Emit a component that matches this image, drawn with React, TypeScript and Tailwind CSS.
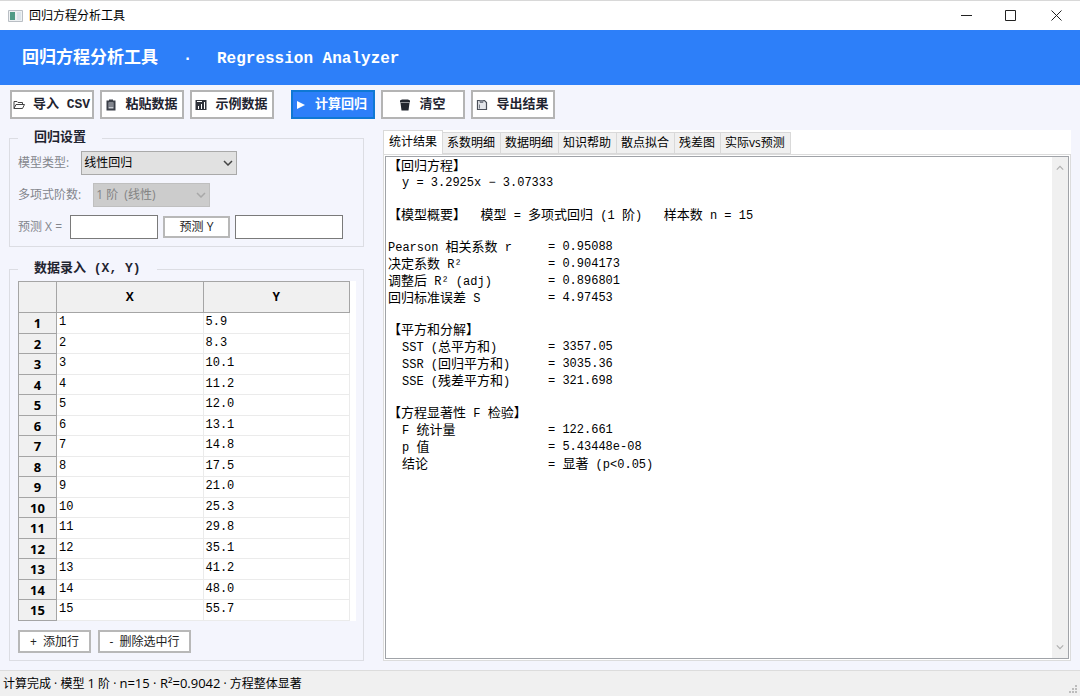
import { useState } from 'react';
import type { ReactNode } from 'react';

const points = [
  ['1', '5.9'], ['2', '8.3'], ['3', '10.1'], ['4', '11.2'], ['5', '12.0'],
  ['6', '13.1'], ['7', '14.8'], ['8', '17.5'], ['9', '21.0'], ['10', '25.3'],
  ['11', '29.8'], ['12', '35.1'], ['13', '41.2'], ['14', '48.0'], ['15', '55.7'],
];

const tabs = ['统计结果', '系数明细', '数据明细', '知识帮助', '散点拟合', '残差图', '实际vs预测'];

const summary = [
  ['Pearson 相关系数 r', '0.95088'],
  ['决定系数 R²', '0.904173'],
  ['调整后 R² (adj)', '0.896801'],
  ['回归标准误差 S', '4.97453'],
];

const squares = [
  ['SST (总平方和)', '3357.05'],
  ['SSR (回归平方和)', '3035.36'],
  ['SSE (残差平方和)', '321.698'],
];

const fTest = [
  ['F 统计量', '122.661'],
  ['p 值', '5.43448e-08'],
  ['结论', '显著 (p<0.05)'],
];

const UI = "font-['Open_Sans','Noto_Sans_CJK_SC',sans-serif]";
const MONO = "font-['Liberation_Mono','Noto_Sans_CJK_SC',monospace]";

const toolBtn = 'flex h-[29px] w-[84px] items-center justify-center gap-2 border-2 border-[#b4b4b4] bg-white pr-px whitespace-nowrap text-[13px] font-bold text-[#1f2430]';
const smallBtn = 'border-2 border-[#b8b8b8] bg-white text-xs whitespace-nowrap text-[#222]';

function FolderIcon() {
  return (
    <svg className="h-3 w-3 shrink-0" viewBox="0 0 12 12" fill="none" stroke="#444" strokeWidth="1">
      <path d="M1 9.5V2.5h3l1 1h4.5v2M1 9.5l2-4h8.5l-2 4z" />
    </svg>
  );
}

function ClipboardIcon() {
  return (
    <svg className="h-3 w-3 shrink-0" viewBox="0 0 12 12">
      <path d="M1.5 1.5h2.500V.5h4v1h2.500v10h-9z" fill="#3b3f48" />
      <path d="M3.500 3.500h5v6h-5z" fill="#c9ccd2" />
      <path d="M3.500 5h5M3.500 7h5" stroke="#3b3f48" />
    </svg>
  );
}

function ChartIcon() {
  return (
    <svg className="h-3 w-3 shrink-0" viewBox="0 0 12 12">
      <path d="M.5 1h11v10H.5z" fill="#30333b" />
      <path d="M2 2h5v1H2zM3 7h1v3H3zM6 5h1v5H6zM9 3h1v7H9z" fill="#fff" />
    </svg>
  );
}

function TrashIcon() {
  return (
    <svg className="h-3 w-3 shrink-0" viewBox="0 0 12 12" fill="#22262e">
      <path d="M1 1.500l2-1h6l2 1v2H1zM1.500 4h9l-1 7.500h-7z" />
    </svg>
  );
}

function ExportIcon() {
  return (
    <svg className="h-3 w-3 shrink-0" viewBox="0 0 12 12">
      <path d="M1.500 1.500h7l2 2v7h-9z" fill="#e4e6ea" stroke="#4b5059" strokeWidth="1.200" />
      <path d="M4 1.500h3v2H4zM3.500 5.500v4" fill="#8a8f98" stroke="#777c86" />
    </svg>
  );
}

function Chevron({ className, up }: { className: string; up?: boolean }) {
  return (
    <svg className={className} viewBox="0 0 10 6" fill="none" stroke="currentColor" strokeWidth="1.500">
      <path d={up ? 'M1 5l4-4 4 4' : 'M1 1l4 4 4-4'} />
    </svg>
  );
}

function Group({ title, className, children }: { title: string; className: string; children: ReactNode }) {
  return (
    <fieldset className={`min-w-0 border border-[#dcdde3] px-2 ${className}`}>
      <legend className={`px-4 text-[13px] leading-4 font-bold text-[#1f2430] ${MONO}`}>{title}</legend>
      {children}
    </fieldset>
  );
}

// Chinese runs are set one pixel larger than the fixed-width latin text
function Mixed({ text }: { text: string }) {
  return text.split(/([\u3000-\u9fff]+)/).map((part, i) => (
    <span key={i} className={i % 2 ? 'text-[13px]' : 'text-xs'}>{part}</span>
  ));
}

function Section({ title, rows, indent }: { title?: string; rows: string[][]; indent?: boolean }) {
  return (
    <section>
      {title && <h2 className="h-[17px]"><Mixed text={title} /></h2>}
      <dl>
        {rows.map(([label, value]) => (
          <div key={label} className="flex h-[17px]">
            <dt className={indent ? 'w-[160px] pl-[14px]' : 'w-[160px]'}><Mixed text={label} /></dt>
            <dd><Mixed text={'= ' + value} /></dd>
          </div>
        ))}
      </dl>
    </section>
  );
}

function Report() {
  return (
    <div className="flex flex-col gap-[15px]">
      <section>
        <h2 className="h-[17px]"><Mixed text="【回归方程】" /></h2>
        <p className="h-[17px] pl-[14px]">y = 3.2925x − 3.07333</p>
      </section>
      <p className="h-[17px]"><Mixed text="【模型概要】  模型 = 多项式回归 (1 阶)   样本数 n = 15" /></p>
      <Section rows={summary} />
      <Section title="【平方和分解】" rows={squares} indent />
      <Section title="【方程显著性 F 检验】" rows={fTest} indent />
    </div>
  );
}

export default function App() {
  const [tab, setTab] = useState(0);
  const [x, setX] = useState('');

  return (
    <div className={`flex min-h-screen flex-col bg-[#f4f5fd] text-xs text-black ${UI}`}>
      <div className="flex h-[30px] items-center border-t border-[#d8d8d8] bg-white pl-2">
        <svg className="h-3 w-[15px]" viewBox="0 0 15 12">
          <path d="M.5.5h14v11H.5z" fill="#eef1f3" stroke="#b9bec4" />
          <path d="M2 2h5v8H2z" fill="#4f9b86" />
          <path d="M9 2h4v8H9z" fill="#dbe4ea" />
        </svg>
        <span className="ml-[6px] flex-1 text-xs">回归方程分析工具</span>
        <div className="flex items-center text-[#222]">
          <button aria-label="最小化" className="flex h-7 w-11 items-center justify-center">
            <svg className="h-[11px] w-[11px]" viewBox="0 0 11 11"><path d="M0 5.500h11" stroke="currentColor" /></svg>
          </button>
          <button aria-label="最大化" className="flex h-7 w-11 items-center justify-center">
            <svg className="h-[11px] w-[11px]" viewBox="0 0 11 11"><path d="M.5.5h10v10H.5z" fill="none" stroke="currentColor" /></svg>
          </button>
          <button aria-label="关闭" className="flex h-7 w-12 items-center justify-center">
            <svg className="h-[11px] w-[11px]" viewBox="0 0 11 11"><path d="M.5.5l10 10M10.500.5l-10 10" stroke="currentColor" /></svg>
          </button>
        </div>
      </div>

      <header className={`flex h-[55px] items-center bg-[#2d7ff9] pt-[3px] pl-[22px] font-bold text-white ${MONO}`}>
        <h1 className="flex items-center whitespace-pre">
          <span className="text-[17px]">回归方程分析工具</span>
          <span className="w-[59px] text-center text-base">·</span>
          <span className="text-base">Regression Analyzer</span>
        </h1>
      </header>

      <div className={`flex gap-[6px] px-[10px] pt-[5px] ${MONO}`}>
        <button className={toolBtn}><FolderIcon />导入 CSV</button>
        <button className={toolBtn}><ClipboardIcon />粘贴数据</button>
        <button className={toolBtn}><ChartIcon />示例数据</button>
        <button className="ml-[11px] flex h-[29px] w-[84px] items-center justify-center gap-[10px] border-2 border-[#0f78d4] bg-[#2d7ff9] pr-[2px] text-[13px] font-bold whitespace-nowrap text-white">
          <svg className="h-2 w-2 shrink-0" viewBox="0 0 8 8" fill="currentColor"><path d="M0 0l8 4-8 4z" /></svg>
          计算回归
        </button>
        <button className={toolBtn}><TrashIcon />清空</button>
        <button className={toolBtn}><ExportIcon />导出结果</button>
      </div>

      <main className="flex flex-1 gap-[19px] px-[9px] pt-[11px]">
        <div className="flex w-[355px] shrink-0 flex-col">
          <Group title="回归设置" className="h-[117px]">
            <div className="flex flex-col gap-2 pt-[5px] text-[#83858c]">
              <div className="flex h-6 items-center gap-3">
                <label htmlFor="model">模型类型:</label>
                <div className="relative">
                  <select id="model" className="h-6 w-[156px] appearance-none border border-[#a9a9a9] bg-[#e1e1e1] pl-[2px] text-xs text-black">
                    <option>线性回归</option>
                  </select>
                  <Chevron className="pointer-events-none absolute top-[9px] right-1 h-[6px] w-[10px] text-[#444]" />
                </div>
              </div>
              <div className="flex h-6 items-center gap-3">
                <label htmlFor="degree">多项式阶数:</label>
                <div className="relative">
                  <select id="degree" disabled className="h-6 w-[117px] appearance-none border border-[#bfbfbf] bg-[#cccccc] pl-[2px] text-xs text-[#838383] opacity-100">
                    <option>1 阶&nbsp;&nbsp;(线性)</option>
                  </select>
                  <Chevron className="pointer-events-none absolute top-[9px] right-1 h-[6px] w-[10px] text-[#a8a8a8]" />
                </div>
              </div>
              <div className="flex h-6 items-center gap-[5px]">
                <label htmlFor="px" className="pr-[3px]">预测 X =</label>
                <input id="px" value={x} onChange={(e) => setX(e.target.value)} className="h-6 w-[88px] border border-[#7a7a7a] bg-white px-1 text-black" />
                <button className={`h-[22px] w-[67px] ${smallBtn}`}>预测 Y</button>
                <input aria-label="预测结果" readOnly className="h-6 w-[108px] border border-[#7a7a7a] bg-white px-1 text-black" />
              </div>
            </div>
          </Group>

          <Group title="数据录入 (X, Y)" className="mt-[14px] h-[400px]">
            <div className="mt-[4px] w-[338px] bg-white">
              <table className="w-[332px] table-fixed border-collapse">
                <thead>
                  <tr className="h-[31px] bg-[#f0f0f0] text-center font-bold">
                    <th className="w-[38px] border border-[#a5a5a5]"></th>
                    <th className="border border-[#a5a5a5]">X</th>
                    <th className="border border-[#a5a5a5]">Y</th>
                  </tr>
                </thead>
                <tbody>
                  {points.map(([px, py], i) => (
                    <tr key={px} className="odd:h-[21px] even:h-[20px]">
                      <th className="border border-[#a5a5a5] bg-[#f0f0f0] p-0 text-[13px] leading-4 font-bold">{i + 1}</th>
                      <td className={`border border-[#ebebeb] p-0 pb-[2px] pl-[2px] leading-4 ${MONO}`}>{px}</td>
                      <td className={`border border-[#ebebeb] p-0 pb-[2px] pl-[2px] leading-4 ${MONO}`}>{py}</td>
                    </tr>
                  ))}
                </tbody>
              </table>
            </div>
            <div className="mt-[9px] flex gap-[7px]">
              <button className={`h-[23px] w-[73px] ${smallBtn}`}>+&nbsp; 添加行</button>
              <button className={`h-[23px] w-[93px] ${smallBtn}`}>-&nbsp; 删除选中行</button>
            </div>
          </Group>
        </div>

        <section className="flex min-w-0 flex-1 flex-col bg-white">
          <div role="tablist" className="flex items-end">
            {tabs.map((t, i) => (
              <button key={t} role="tab" aria-selected={tab === i} onClick={() => setTab(i)}
                className={tab === i
                  ? 'h-[24px] border border-b-0 border-[#d9d9d9] bg-white px-[5px] pb-[2px] whitespace-nowrap'
                  : 'h-[22px] border border-l-0 border-[#d9d9d9] bg-[#f0f0f0] pr-[5px] pl-1 whitespace-nowrap'}>
                {t}
              </button>
            ))}
          </div>
          <div className="flex flex-1 border border-[#dcdcdc] p-px">
            <div className="flex flex-1 border border-[#a0a3a8]">
              <div role="tabpanel" className={`flex-1 pt-px pl-[2px] text-xs leading-[17px] whitespace-pre ${MONO}`}>
                {tab === 0 && <Report />}
              </div>
              <div className="flex w-4 flex-col items-center justify-between bg-[#f0f0f0] py-2 text-[#b0b0b0]">
                <Chevron up className="h-[6px] w-2" />
                <Chevron className="h-[6px] w-2" />
              </div>
            </div>
          </div>
        </section>
      </main>

      <footer className="mt-[9px] flex h-[26px] items-center justify-between border-t border-[#dcdcdc] bg-[#f0f0f0] px-[3px]">
        <p className="whitespace-pre">
          计算完成 · 模型 <span className="text-[13px]">1</span> 阶 · <span className="text-[13px]">n=15 · R²=0.9042</span> · 方程整体显著
        </p>
        <svg className="mb-[3px] h-2 w-2 self-end" viewBox="0 0 8 8" fill="#bdbdbd">
          <path d="M6 0h2v2H6zM3 3h2v2H3zM6 3h2v2H6zM0 6h2v2H0zM3 6h2v2H3zM6 6h2v2H6z" />
        </svg>
      </footer>
    </div>
  );
}
